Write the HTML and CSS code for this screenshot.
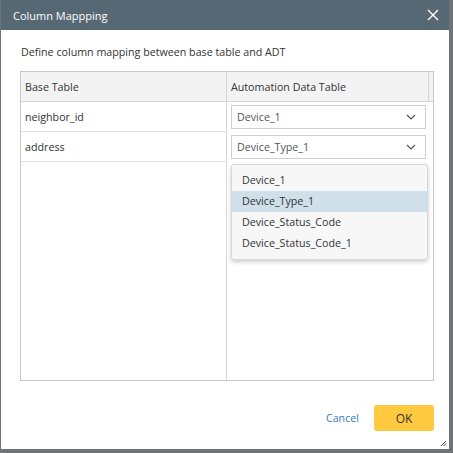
FILE: index.html
```html
<!DOCTYPE html>
<html lang="en">
<head>
    <meta charset="UTF-8">
    <title>Column Mappping</title>
    <link rel="stylesheet" href="styles.css">
</head>
<body>

    <div class="dialog">
        <div class="dialog-header">
            <span class="dialog-title">Column Mappping</span>
            <svg class="close" width="12" height="12" viewBox="0 0 12 12">
                <path d="M1 1 L11 11 M11 1 L1 11" stroke="#fff" stroke-width="1.4" fill="none"/>
            </svg>
        </div>

        <div class="dialog-body">
            <p class="intro">Define column mapping between base table and ADT</p>

            <div class="grid">
                <div class="grid-head">
                    <div class="cell base">Base Table</div>
                    <div class="cell adt">Automation Data Table</div>
                    <div class="gutter"></div>
                </div>
                <div class="grid-row">
                    <div class="cell base">neighbor_id</div>
                    <div class="cell adt">
                        <div class="select">
                            <span>Device_1</span>
                            <svg width="10" height="6" viewBox="0 0 10 6"><path d="M1 1 L5 5 L9 1" stroke="#555" stroke-width="1.2" fill="none"/></svg>
                        </div>
                    </div>
                    <div class="gutter"></div>
                </div>
                <div class="grid-row">
                    <div class="cell base">address</div>
                    <div class="cell adt">
                        <div class="select open">
                            <span>Device_Type_1</span>
                            <svg width="10" height="6" viewBox="0 0 10 6"><path d="M1 1 L5 5 L9 1" stroke="#555" stroke-width="1.2" fill="none"/></svg>
                            <ul class="dropdown">
                                <li>Device_1</li>
                                <li class="active">Device_Type_1</li>
                                <li>Device_Status_Code</li>
                                <li>Device_Status_Code_1</li>
                            </ul>
                        </div>
                    </div>
                    <div class="gutter"></div>
                </div>
                <div class="grid-fill">
                    <div class="fill-base"></div>
                    <div class="fill-adt"></div>
                </div>
            </div>

            <div class="footer">
                <a class="cancel">Cancel</a>
                <button class="ok">OK</button>
            </div>
        </div>

        <svg class="grip" width="7" height="7" viewBox="0 0 7 7">
            <path d="M6 1 L1 6 M6 3.5 L3.5 6 M6 5.5 L5.5 6" stroke="#555" stroke-width="1" fill="none"/>
        </svg>
    </div>

</body>
</html>
```

FILE: styles.css
```css
body {
    margin: 0;
    width: 453px;
    height: 453px;
    background: #6f7377;
    font-family: "Open Sans", "Noto Sans", sans-serif;
    font-size: 10.7px;
    color: #333;
    overflow: hidden;
}

.dialog {
    position: relative;
    margin-left: 1px;
    width: 448px;
    height: 449px;
    background: #fff;
    display: flex;
    flex-direction: column;
}

.dialog-header {
    height: 30px;
    background: #566873;
    color: #fff;
    display: flex;
    align-items: center;
    justify-content: space-between;
    padding: 0 10px 0 12px;
}

.dialog-title {
    font-size: 11px;
}

.close {
    display: block;
}

.dialog-body {
    flex: 1;
    display: flex;
    flex-direction: column;
    padding: 0 15px 18px 19px;
}

.intro {
    margin: 14px 0 11px 1px;
    line-height: 16px;
}

.grid {
    border: 1px solid #c8c8c8;
    height: 308px;
    display: flex;
    flex-direction: column;
}

.grid-head,
.grid-row {
    display: flex;
    height: 30px;
}

.grid-head {
    background: #f3f3f3;
    border-bottom: 1px solid #d6d6d6;
    height: 29px;
}

.grid-head .cell {
    border-right: 1px solid #d6d6d6;
}

.cell {
    display: flex;
    align-items: center;
}

.cell.base {
    width: 201px;
    padding-left: 4px;
    border-right: 1px solid #d6d6d6;
}

.cell.adt {
    width: 197px;
    padding-left: 4px;
}

.grid-head .cell.adt {
    width: 197px;
}

.gutter {
    flex: 1;
}

.grid-row .cell.base {
    border-bottom: 1px solid #e2e2e2;
}

.select {
    position: relative;
    width: 195px;
    height: 24px;
    box-sizing: border-box;
    border: 1px solid #cfcfcf;
    display: flex;
    align-items: center;
    justify-content: space-between;
    padding: 0 9px 0 5px;
    color: #555;
    background: #fff;
}

.dropdown {
    position: absolute;
    top: 28px;
    left: -1px;
    width: 195px;
    margin: 0;
    padding: 5px 0;
    list-style: none;
    background: #f7f7f7;
    border: 1px solid #d8d8d8;
    border-radius: 3px;
    box-shadow: 0 2px 4px rgba(0, 0, 0, 0.2);
    color: #333;
}

.dropdown li {
    height: 21px;
    line-height: 21px;
    padding-left: 10px;
}

.dropdown li.active {
    background: #cfe0ea;
}

.grid-fill {
    flex: 1;
    display: flex;
}

.fill-base {
    width: 205px;
    border-right: 1px solid #d6d6d6;
}

.footer {
    margin-top: auto;
    display: flex;
    justify-content: flex-end;
    align-items: center;
    gap: 15px;
}

.cancel {
    color: #2f7ec1;
    cursor: pointer;
}

.ok {
    width: 60px;
    height: 26px;
    border: none;
    border-radius: 3px;
    background: #ffca3f;
    font-family: inherit;
    font-size: 12px;
    color: #333;
    cursor: pointer;
}

.grip {
    position: absolute;
    right: 2px;
    bottom: 2px;
}
```
